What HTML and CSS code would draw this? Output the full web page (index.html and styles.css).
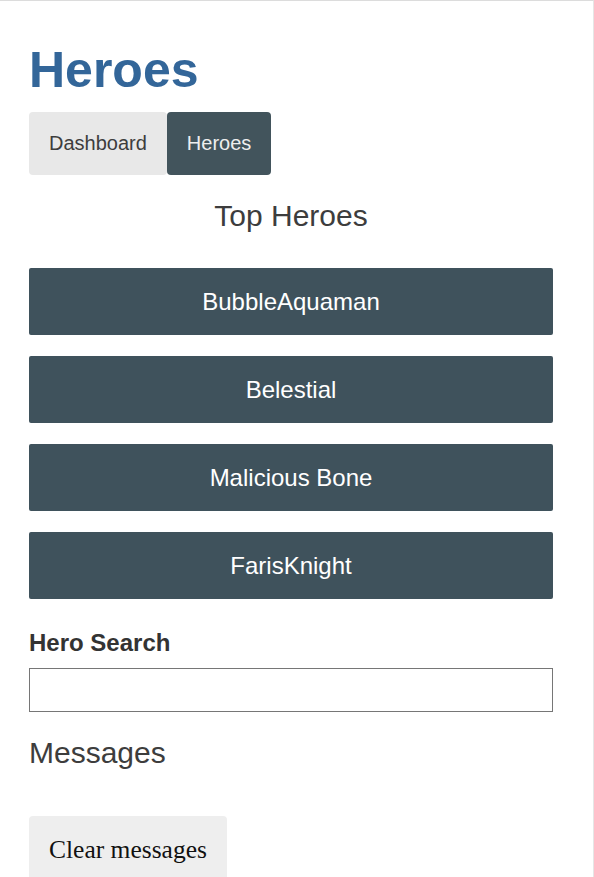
FILE: index.html
```html
<!DOCTYPE html>
<html lang="en">
<head>
<meta charset="utf-8">
<title>Tour of Heroes</title>
<link rel="stylesheet" href="styles.css">
</head>
<body>
<div class="page">
  <h1 class="title">Heroes</h1>
  <nav class="nav">
    <a class="nav-link">Dashboard</a>
    <a class="nav-link nav-link-active">Heroes</a>
  </nav>
  <h2 class="top-title">Top Heroes</h2>
  <div class="hero-menu">
    <a class="hero-tile">BubbleAquaman</a>
    <a class="hero-tile">Belestial</a>
    <a class="hero-tile">Malicious Bone</a>
    <a class="hero-tile">FarisKnight</a>
  </div>
  <label class="search-label" for="search-box">Hero Search</label>
  <input class="search-box" id="search-box" type="text">
  <h2 class="messages-title">Messages</h2>
  <button class="clear-btn" type="button">Clear messages</button>
</div>
</body>
</html>
```

FILE: styles.css
```css
html, body {
  margin: 0;
  padding: 0;
  background: #ffffff;
}
body {
  font-family: "Liberation Sans", Arial, sans-serif;
  overflow: hidden;
}
.page {
  box-sizing: border-box;
  width: 594px;
  height: 877px;
  border-top: 1px solid #dcdcdc;
  border-right: 1px solid #e6e6e6;
  padding: 0 40px 0 29px;
  display: flex;
  flex-direction: column;
  align-items: stretch;
}
.page > * {
  flex-shrink: 0;
}
.title {
  margin: 40px 0 0 0;
  font-size: 50px;
  line-height: 58px;
  font-weight: bold;
  color: #336699;
}
.nav {
  margin-top: 13px;
  display: flex;
}
.nav-link {
  display: block;
  padding: 20px;
  font-size: 20px;
  line-height: 23px;
  background: #e8e8e8;
  color: #3d3d3d;
  border-radius: 4px;
}
.nav-link-active {
  background: #42545c;
  color: #eeeeee;
}
.top-title {
  margin: 24px 0 0 0;
  font-size: 30px;
  line-height: 34px;
  font-weight: normal;
  text-align: center;
  color: #3d3d3d;
}
.hero-menu {
  margin-top: 35px;
  display: flex;
  flex-direction: column;
  gap: 21px;
}
.hero-tile {
  display: block;
  padding: 20px;
  font-size: 24px;
  line-height: 27px;
  text-align: center;
  background: #3f525c;
  color: #ffffff;
  border-radius: 2px;
}
.search-label {
  margin-top: 30px;
  font-size: 24px;
  line-height: 28px;
  font-weight: bold;
  color: #333333;
}
.search-box {
  margin: 11px 0 0 0;
  box-sizing: border-box;
  height: 44px;
  width: 100%;
  border: 1px solid #767676;
  border-radius: 0;
  padding: 0 8px;
  font-size: 20px;
}
.messages-title {
  margin: 24px 0 0 0;
  font-size: 30px;
  line-height: 34px;
  font-weight: normal;
  color: #3d3d3d;
}
.clear-btn {
  align-self: flex-start;
  margin-top: 46px;
  padding: 20px;
  border: none;
  border-radius: 4px;
  background: #eeeeee;
  color: #111111;
  font-family: "Liberation Serif", "Times New Roman", serif;
  font-size: 25.5px;
  line-height: 28px;
}
```
